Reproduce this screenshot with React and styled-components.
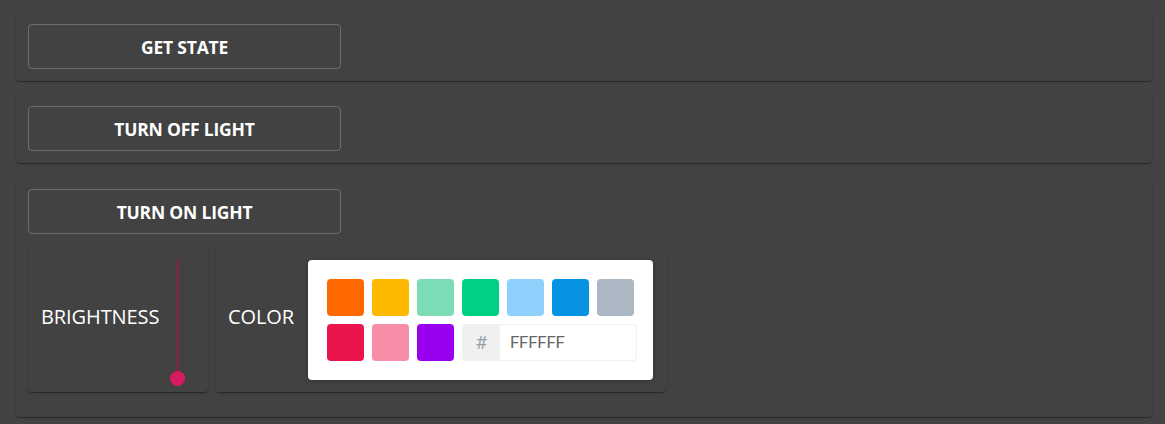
import React from "react";
import styled, { createGlobalStyle } from "styled-components";

const Global = createGlobalStyle`
  html, body { margin: 0; padding: 0; background: #434343; }
  body { font-family: "Open Sans", "DejaVu Sans", sans-serif; color: #fff; }
`;

const Page = styled.div`
  display: flex;
  flex-direction: column;
  gap: 13px;
  padding: 12px 13px 6px 16px;
`;

const Card = styled.section`
  background: #424242;
  border-radius: 4px;
  box-shadow: 0 2px 1px -1px rgba(0,0,0,0.2), 0 1px 1px 0 rgba(0,0,0,0.14), 0 1px 3px 0 rgba(0,0,0,0.12);
  padding: 12px 12px ${(p) => (p.$tall ? "25px" : "12px")};
  margin-top: ${(p) => (p.$tall ? "1px" : "0")};
  display: flex;
  flex-direction: column;
  gap: 13px;
`;

const ActionButton = styled.button`
  width: 313px;
  height: 45px;
  box-sizing: border-box;
  background: transparent;
  border: 1px solid rgba(255,255,255,0.23);
  border-radius: 4px;
  color: #fff;
  font-family: "Open Sans", sans-serif;
  font-weight: 700;
  font-size: 17.5px;
  letter-spacing: -0.2px;
  text-transform: uppercase;
  cursor: pointer;
  padding: 0;
`;

const Row = styled.div`
  display: flex;
  gap: 7px;
`;

const SubCard = styled.div`
  box-sizing: border-box;
  width: ${(p) => p.$width}px;
  height: 145px;
  background: #424242;
  border-radius: 4px;
  box-shadow: 0 2px 1px -1px rgba(0,0,0,0.2), 0 1px 1px 0 rgba(0,0,0,0.14), 0 1px 3px 0 rgba(0,0,0,0.12);
  padding: 12px 13px;
  display: flex;
  align-items: center;
`;

const Label = styled.span`
  font-size: 20px;
  font-weight: 400;
  letter-spacing: -0.1px;
  margin-top: -6px;
  white-space: nowrap;
`;

const SliderWrap = styled.div`
  flex: none;
  margin-left: auto;
  margin-right: 9px;
  width: 16px;
  height: 120px;
  position: relative;
  align-self: flex-start;
`;

const Track = styled.div`
  position: absolute;
  left: 6px;
  top: 0;
  bottom: 0;
  width: 3px;
  background: #772a45;
  border-radius: 1px;
`;

const Thumb = styled.div`
  position: absolute;
  left: 0;
  bottom: -7px;
  width: 15px;
  height: 15px;
  border-radius: 50%;
  background: #d81b60;
`;

const Picker = styled.div`
  flex: none;
  box-sizing: border-box;
  margin-left: auto;
  width: 345px;
  height: 120px;
  background: #fff;
  border-radius: 4px;
  box-shadow: 0 1px 4px rgba(0,0,0,0.25);
  padding: 19px;
  display: grid;
  grid-template-columns: repeat(7, 37px);
  grid-auto-rows: 37px;
  gap: 8px;
`;

const Swatch = styled.div`
  border-radius: 4px;
  background: ${(p) => p.$color};
`;

const HexField = styled.div`
  grid-column: span 4;
  width: 175px;
  display: flex;
  border-radius: 4px;
  box-shadow: inset 0 0 0 1px #f0f0f0;
  overflow: hidden;
`;

const Hash = styled.div`
  width: 38px;
  background: #f0f0f0;
  color: #98a1a4;
  display: flex;
  align-items: center;
  justify-content: center;
  font-family: "Roboto", sans-serif;
  font-size: 19px;
`;

const HexInput = styled.div`
  flex: 1;
  display: flex;
  align-items: center;
  padding-left: 10px;
  color: #666;
  font-family: "Roboto", sans-serif;
  font-size: 17px;
  letter-spacing: -0.3px;
`;

const colors = ["#FF6900", "#FCB900", "#7BDCB5", "#00D084", "#8ED1FC", "#0693E3", "#ABB8C3", "#EB144C", "#F78DA7", "#9900EF"];

export default function App() {
  return (
    <>
      <Global />
      <Page>
        <Card>
          <ActionButton>Get State</ActionButton>
        </Card>
        <Card>
          <ActionButton>Turn Off Light</ActionButton>
        </Card>
        <Card $tall>
          <ActionButton>Turn On Light</ActionButton>
          <Row>
            <SubCard $width={180}>
              <Label>BRIGHTNESS</Label>
              <SliderWrap>
                <Track />
                <Thumb />
              </SliderWrap>
            </SubCard>
            <SubCard $width={451}>
              <Label>COLOR</Label>
              <Picker>
                {colors.map((c) => (
                  <Swatch key={c} $color={c} />
                ))}
                <HexField>
                  <Hash>#</Hash>
                  <HexInput>FFFFFF</HexInput>
                </HexField>
              </Picker>
            </SubCard>
          </Row>
        </Card>
      </Page>
    </>
  );
}
